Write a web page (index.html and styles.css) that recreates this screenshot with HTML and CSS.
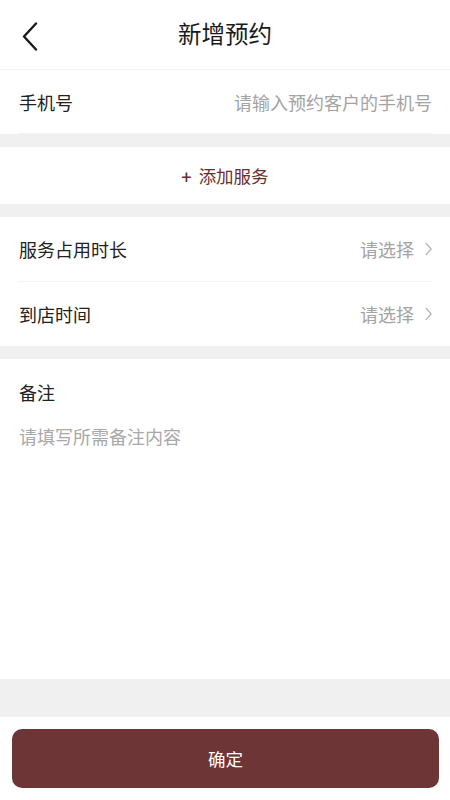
FILE: index.html
```html
<!DOCTYPE html>
<html lang="zh-CN">
<head>
<meta charset="utf-8">
<title>新增预约</title>
<link rel="stylesheet" href="styles.css">
</head>
<body>
<div class="page">
  <header class="nav">
    <svg class="back" width="16" height="30" viewBox="0 0 16 30"><path d="M14 1.5 L2 14.5 L14 27.5" fill="none" stroke="#1a1a1a" stroke-width="2.4" stroke-linecap="round" stroke-linejoin="round"/></svg>
    <h1 class="title">新增预约</h1>
  </header>

  <section class="card">
    <div class="row row-phone">
      <span class="label">手机号</span>
      <span class="placeholder">请输入预约客户的手机号</span>
    </div>
  </section>

  <div class="gap"></div>

  <section class="card add">
    <span class="add-plus">+</span><span class="add-text">添加服务</span>
  </section>

  <div class="gap"></div>

  <section class="card">
    <div class="row row-select first">
      <span class="label">服务占用时长</span>
      <span class="value">请选择<svg class="chev" width="7" height="14" viewBox="0 0 7 14"><path d="M0.8 1 L6.2 7 L0.8 13" fill="none" stroke="#b5b5b5" stroke-width="1.2"/></svg></span>
    </div>
    <div class="row row-select">
      <span class="label">到店时间</span>
      <span class="value">请选择<svg class="chev" width="7" height="14" viewBox="0 0 7 14"><path d="M0.8 1 L6.2 7 L0.8 13" fill="none" stroke="#b5b5b5" stroke-width="1.2"/></svg></span>
    </div>
  </section>

  <div class="gap"></div>

  <section class="card notes">
    <div class="notes-label">备注</div>
    <div class="notes-ph">请填写所需备注内容</div>
  </section>

  <div class="gap-big"></div>

  <footer class="footer">
    <button class="confirm">确定</button>
  </footer>
</div>
</body>
</html>
```

FILE: styles.css
```css
* { box-sizing: border-box; }
html, body { margin: 0; padding: 0; background: #fff; }
body {
  font-family: "Noto Sans CJK SC", "Noto Sans", sans-serif;
  color: #1f1f1f;
}
.page {
  width: 450px;
  height: 800px;
  display: flex;
  flex-direction: column;
  overflow: hidden;
}
.nav {
  position: relative;
  height: 70px;
  border-bottom: 1px solid #f3f3f3;
  display: flex;
  align-items: center;
  justify-content: center;
  flex-shrink: 0;
}
.back {
  position: absolute;
  left: 22px;
  top: 22px;
}
.title {
  margin: 0;
  font-size: 23.5px;
  font-weight: 400;
  color: #1a1a1a;
  line-height: 1;
  padding-bottom: 2px;
}
.card { background: #fff; flex-shrink: 0; }
.row {
  margin: 0 18px;
  display: flex;
  align-items: center;
  justify-content: space-between;
  font-size: 18px;
}
.row-phone {
  height: 64px;
  border-bottom: 1px solid #f3f3f3;
}
.label { color: #222; padding-left: 1px; }
.placeholder { color: #a3a3a3; }
.gap { height: 13px; background: #f0f0f0; flex-shrink: 0; }
.add {
  height: 57px;
  display: flex;
  align-items: center;
  justify-content: center;
  color: #6b2e2f;
}
.add-plus {
  font-size: 18px;
  font-weight: 500;
  margin-right: 7px;
}
.add-text {
  font-size: 17.5px;
}
.row-select { height: 64px; }
.row-select.first {
  height: 65px;
  border-bottom: 1px solid #f3f3f3;
}
.value {
  color: #a3a3a3;
  display: flex;
  align-items: center;
}
.chev { margin-left: 11px; margin-right: 0; }
.notes {
  height: 320px;
  padding: 20px 19px 0;
}
.notes-label {
  font-size: 18px;
  color: #222;
  line-height: 26px;
}
.notes-ph {
  margin-top: 18px;
  font-size: 18px;
  color: #a8a8a8;
  line-height: 26px;
}
.gap-big { height: 38px; background: #f0f0f0; flex-shrink: 0; }
.footer {
  flex: 1;
  padding: 12px 11px 0 12px;
  background: #fff;
}
.confirm {
  width: 100%;
  height: 59px;
  border: none;
  border-radius: 10px;
  background: #6d3536;
  color: #fff;
  font-family: "Noto Sans CJK SC", sans-serif;
  font-size: 17.5px;
  padding: 0;
}
```
